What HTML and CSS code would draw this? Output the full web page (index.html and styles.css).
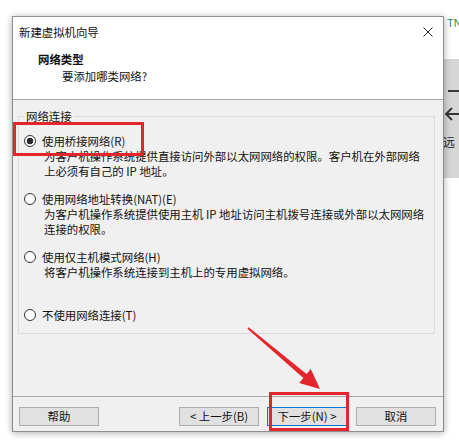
FILE: index.html
```html
<!DOCTYPE html>
<html lang="zh-CN">
<head>
<meta charset="utf-8">
<title>新建虚拟机向导</title>
<link rel="stylesheet" href="styles.css">
</head>
<body>
<div class="desk">
  <div class="bgwin">
    <div class="bg-top"><span class="tn">TN</span></div>
    <div class="bg-band">
      <div class="bg-dash"></div>
      <svg class="bg-arrow" width="15" height="14" viewBox="0 0 15 14"><path d="M2 7H15M8 1L2 7L8 13" fill="none" stroke="#333" stroke-width="1.8"/></svg>
      <div class="bg-yuan">远</div>
    </div>
  </div>

  <div class="dialog">
    <div class="titlebar">
      <span>新建虚拟机向导</span>
      <svg class="close" width="10" height="10" viewBox="0 0 10 10"><path d="M0.5 0.5L9.5 9.5M9.5 0.5L0.5 9.5" stroke="#222" stroke-width="1"/></svg>
    </div>
    <div class="header">
      <div class="h-title">网络类型</div>
      <div class="h-sub">要添加哪类网络?</div>
    </div>
    <div class="content">
      <fieldset class="group">
        <legend>网络连接</legend>
        <div class="opt">
          <div class="opt-row"><span class="radio checked"></span>使用桥接网络(R)</div>
          <div class="opt-desc">为客户机操作系统提供直接访问外部以太网网络的权限。客户机在外部网络<br>上必须有自己的 IP 地址。</div>
        </div>
        <div class="opt">
          <div class="opt-row"><span class="radio"></span>使用网络地址转换(NAT)(E)</div>
          <div class="opt-desc">为客户机操作系统提供使用主机 IP 地址访问主机拨号连接或外部以太网网络<br>连接的权限。</div>
        </div>
        <div class="opt">
          <div class="opt-row"><span class="radio"></span>使用仅主机模式网络(H)</div>
          <div class="opt-desc">将客户机操作系统连接到主机上的专用虚拟网络。</div>
        </div>
        <div class="opt last">
          <div class="opt-row"><span class="radio"></span>不使用网络连接(T)</div>
        </div>
      </fieldset>
    </div>
    <div class="footer">
      <button class="btn">帮助</button>
      <button class="btn back">&lt; 上一步(B)</button>
      <button class="btn next">下一步(N) &gt;</button>
      <button class="btn cancel">取消</button>
    </div>
  </div>

  <div class="mark mark-radio"></div>
  <div class="mark mark-next"></div>
  <svg class="arrow" width="459" height="444" viewBox="0 0 459 444">
    <polygon points="248.6,327.2 306.6,374.1 310.8,369.1 320,389 299.2,382.9 303.4,377.9 247.4,328.8" fill="#e3262b"/>
  </svg>
</div>
</body>
</html>
```
FILE: styles.css
```css
html, body {
  margin: 0;
  padding: 0;
}
body {
  background: #fff;
  font-family: "Noto Sans CJK SC", "Microsoft YaHei", sans-serif;
  font-size: 11.4px;
  color: #111;
}
.desk {
  position: relative;
  width: 459px;
  height: 444px;
  overflow: hidden;
  background: #fff;
}

/* background window at the right edge */
.bgwin {
  position: absolute;
  left: 444px;
  top: 0;
  width: 15px;
  height: 444px;
  overflow: hidden;
  background: #fff;
}
.bg-top {
  height: 59px;
  box-sizing: border-box;
  padding: 16px 0 0 3px;
}
.tn {
  display: block;
  font-family: "Liberation Sans", sans-serif;
  font-size: 11px;
  line-height: 14px;
  color: #2f8a55;
  white-space: nowrap;
}
.bg-band {
  height: 119px;
  background: #d6d6d6;
  overflow: hidden;
  display: flex;
  flex-direction: column;
}
.bg-dash {
  margin: 31px 0 0 4px;
  width: 11px;
  height: 2px;
  background: #3a3a3a;
}
.bg-arrow {
  display: block;
  margin-top: 15px;
}
.bg-yuan {
  margin: 14px 0 0 -1px;
  line-height: 14px;
  font-size: 12px;
  white-space: nowrap;
  color: #222;
}

/* dialog */
.dialog {
  position: absolute;
  left: 12px;
  top: 16px;
  width: 432px;
  height: 416px;
  box-sizing: border-box;
  border: 1px solid #8e8e8e;
  background: #f0f0f0;
  box-shadow: 0 1px 7px rgba(0, 0, 0, 0.33);
  display: flex;
  flex-direction: column;
  z-index: 1;
}
.titlebar {
  height: 30px;
  background: #fff;
  display: flex;
  align-items: center;
  justify-content: space-between;
  padding: 0 10px 0 6px;
  line-height: 30px;
}
.close {
  display: block;
}
.header {
  box-sizing: border-box;
  background: #fff;
  border-bottom: 1px solid #a8a8a8;
  height: 53px;
  padding: 4px 0 0 25px;
  line-height: 17px;
}
.h-title {
  font-weight: bold;
}
.h-sub {
  padding-left: 24px;
}
.content {
  flex: 1;
  padding: 0 8px 0 5px;
}
.group {
  margin: 7.5px 0 0 0;
  border: 1px solid #dadada;
  padding: 8px 5px 9.5px 5px;
  min-width: 0;
}
.group legend {
  padding: 0 2px;
  margin: 0;
  line-height: 17px;
}
.opt {
  margin-bottom: 12px;
}
.opt.last {
  margin-bottom: 0;
}
.opt-row {
  display: flex;
  align-items: center;
  line-height: 17px;
  gap: 6px;
}
.radio {
  display: block;
  width: 12px;
  height: 12px;
  box-sizing: border-box;
  border: 1px solid #333;
  border-radius: 50%;
  background: #fff;
  flex: none;
}
.radio.checked {
  background: radial-gradient(circle, #2b2b2b 0 3px, #fff 3.6px);
}
.opt-desc {
  margin: -1px 0 0 20px;
  line-height: 15px;
  min-height: 30px;
  white-space: nowrap;
}

.footer {
  border-top: 1px solid #a8a8a8;
  padding: 10px 7px 5px 6px;
  display: flex;
  align-items: center;
}
.btn {
  width: 80px;
  height: 19px;
  box-sizing: border-box;
  padding: 0;
  margin: 0;
  border: 1px solid #adadad;
  background: #e1e1e1;
  font-family: inherit;
  font-size: 11.4px;
  line-height: 17px;
  color: #111;
}
.back {
  margin-left: auto;
}
.next {
  margin-left: 8px;
  border-color: #0078d7;
}
.cancel {
  margin-left: 9px;
}

/* annotations */
.mark {
  position: absolute;
  box-sizing: border-box;
  border: 3px solid #e3262b;
  z-index: 2;
}
.mark-radio {
  left: 13px;
  top: 122px;
  width: 131px;
  height: 34px;
}
.mark-next {
  left: 269px;
  top: 392px;
  width: 80px;
  height: 39px;
}
.arrow {
  position: absolute;
  left: 0;
  top: 0;
  z-index: 3;
  pointer-events: none;
}
```
